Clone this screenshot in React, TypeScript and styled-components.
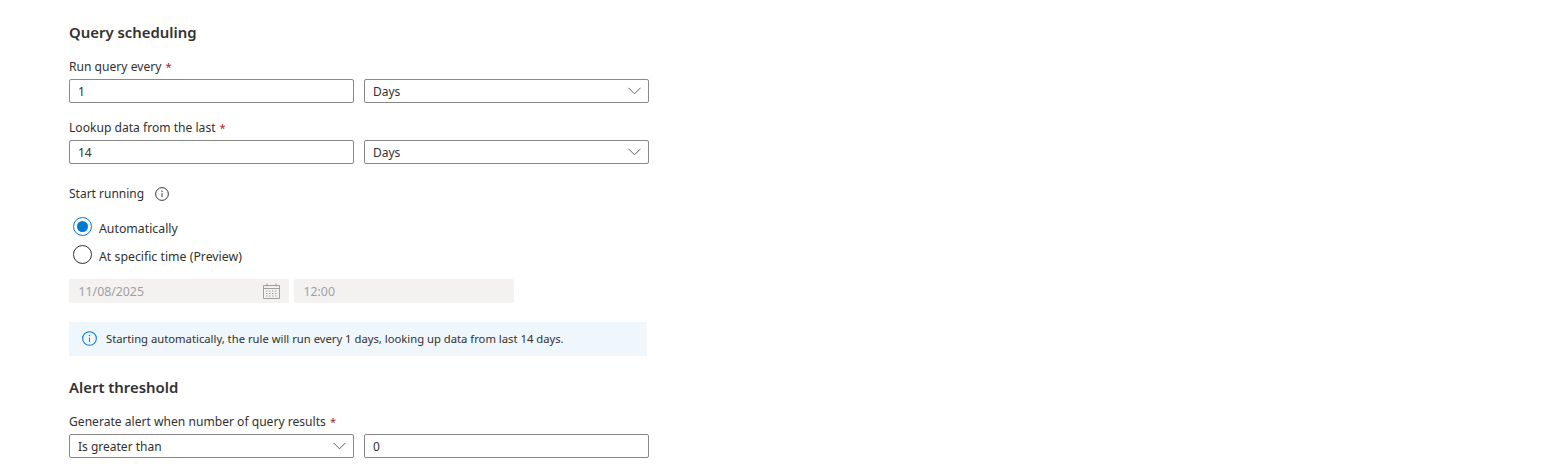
import React from "react";
import styled, { createGlobalStyle } from "styled-components";

const Global = createGlobalStyle`
  html, body { margin: 0; padding: 0; background: #fff; }
  body { font-family: "Noto Sans", "Open Sans", sans-serif; font-size: 12px; color: #323130; }
`;

const Page = styled.div`
  width: 580px;
  height: 472px;
  overflow: hidden;
  padding: 22px 0 0 69px;
`;

const Heading = styled.h2<{ $top?: number }>`
  margin: ${(p) => p.$top ?? 0}px 0 0;
  font-size: 14.9px;
  line-height: 20px;
  font-weight: 600;
  color: #323130;
`;

const Label = styled.label<{ $top: number }>`
  display: block;
  margin-top: ${(p) => p.$top}px;
  height: 18px;
  line-height: 20px;
  font-size: 12.1px;
  color: #323130;
`;

const Star = styled.span`
  color: #a4262c;
  margin-left: 4px;
  font-size: 11px;
`;

const FieldRow = styled.div`
  display: grid;
  grid-template-columns: 285px 285px;
  column-gap: 10px;
  margin-top: 4px;
`;

const Field = styled.div`
  box-sizing: border-box;
  height: 24px;
  padding: 0 8px;
  display: flex;
  align-items: center;
  justify-content: space-between;
  border: 1px solid #8a8886;
  border-radius: 2px;
  background: #fff;
  font-size: 12px;
  color: #323130;
`;

const Chevron = styled.svg`
  width: 13px;
  height: 8px;
  margin-right: -1px;
  flex: none;
`;

const InfoRow = styled.div`
  display: flex;
  align-items: center;
  gap: 11px;
  margin-top: 21px;
  height: 18px;
  line-height: 18px;
  font-size: 12px;
`;

const RadioGroup = styled.div`
  display: flex;
  flex-direction: column;
  gap: 9px;
  margin: 14px 0 0 4px;
`;

const RadioRow = styled.div`
  display: flex;
  align-items: flex-start;
  gap: 7px;
  height: 19px;
`;

const RadioText = styled.span`
  margin-top: 3px;
  line-height: 18px;
  font-size: 12.3px;
`;

const RadioDot = styled.span<{ $on?: boolean }>`
  box-sizing: border-box;
  width: 19px;
  height: 19px;
  border-radius: 50%;
  border: 1.5px solid ${(p) => (p.$on ? "#0078d4" : "#323130")};
  display: flex;
  align-items: center;
  justify-content: center;
  &::after {
    content: "";
    display: ${(p) => (p.$on ? "block" : "none")};
    width: 11px;
    height: 11px;
    border-radius: 50%;
    background: #0078d4;
  }
`;

const DisabledRow = styled.div`
  display: flex;
  gap: 5px;
  margin-top: 15px;
`;

const DisabledField = styled.div<{ $w: number }>`
  box-sizing: border-box;
  width: ${(p) => p.$w}px;
  height: 24px;
  padding: 0 9px 0 9.5px;
  display: flex;
  align-items: center;
  justify-content: space-between;
  border-radius: 2px;
  background: #f3f2f1;
  color: #a19f9d;
  font-size: 12.3px;
`;

const Banner = styled.div`
  box-sizing: border-box;
  width: 578px;
  height: 34px;
  margin-top: 19px;
  padding: 0 0 2px 13px;
  display: flex;
  align-items: center;
  gap: 9px;
  background: #eff6fc;
  font-size: 11.25px;
  color: #323130;
`;

const Info = ({ size, color }: { size: number; color: string }) => (
  <svg width={size} height={size} viewBox="0 0 16 16" fill="none">
    <circle cx="8" cy="8" r="7.3" stroke={color} strokeWidth="1.1" />
    <path d="M8 7v4.6" stroke={color} strokeWidth="1.1" />
    <circle cx="8" cy="4.9" r="0.8" fill={color} />
  </svg>
);

const Down = () => (
  <Chevron viewBox="0 0 13 8" fill="none">
    <path d="M.5.8 6.5 6.8 12.500.8" stroke="#605e5c" strokeWidth="1" />
  </Chevron>
);

const Calendar = () => (
  <svg width="17" height="16" viewBox="0 0 17 16" fill="none">
    <path d="M.5 2.500h16v13H.5z" stroke="#a19f9d" />
    <path d="M.5 5.500h16" stroke="#a19f9d" />
    <path d="M4 .5v3M13 .5v3" stroke="#a19f9d" />
    <path
      d="M3 8h1.500M6 8h1.500M9 8h1.500M12 8h1.500M3 10.500h1.500M6 10.500h1.500M9 10.500h1.500M12 10.500h1.500M3 13h1.500M6 13h1.500M9 13h1.500M12 13h1.500"
      stroke="#a19f9d"
      strokeWidth="1"
    />
  </svg>
);

export default function App() {
  return (
    <>
      <Global />
      <Page>
        <Heading>Query scheduling</Heading>
        <Label $top={15}>
          Run query every<Star>*</Star>
        </Label>
        <FieldRow>
          <Field>1</Field>
          <Field>
            Days
            <Down />
          </Field>
        </FieldRow>
        <Label $top={15}>
          Lookup data from the last<Star>*</Star>
        </Label>
        <FieldRow>
          <Field>14</Field>
          <Field>
            Days
            <Down />
          </Field>
        </FieldRow>
        <InfoRow>
          Start running
          <Info size={14} color="#323130" />
        </InfoRow>
        <RadioGroup>
          <RadioRow>
            <RadioDot $on />
            <RadioText>Automatically</RadioText>
          </RadioRow>
          <RadioRow>
            <RadioDot />
            <RadioText>At specific time (Preview)</RadioText>
          </RadioRow>
        </RadioGroup>
        <DisabledRow>
          <DisabledField $w={220}>
            11/08/2025
            <Calendar />
          </DisabledField>
          <DisabledField $w={220}>12:00</DisabledField>
        </DisabledRow>
        <Banner>
          <Info size={15} color="#0078d4" />
          Starting automatically, the rule will run every 1 days, looking up data from last 14 days.
        </Banner>
        <Heading $top={21}>Alert threshold</Heading>
        <Label $top={15}>
          Generate alert when number of query results<Star>*</Star>
        </Label>
        <FieldRow>
          <Field>
            Is greater than
            <Down />
          </Field>
          <Field>0</Field>
        </FieldRow>
      </Page>
    </>
  );
}
